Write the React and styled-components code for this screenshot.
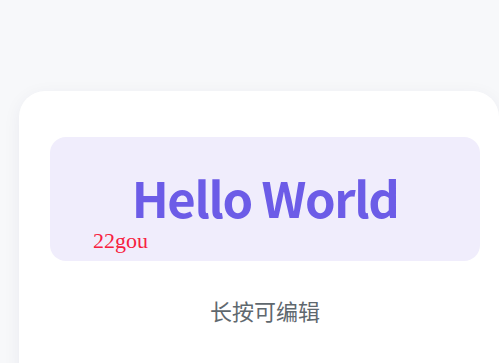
import React from "react";
import styled, { createGlobalStyle } from "styled-components";

const GlobalStyle = createGlobalStyle`
  html, body {
    margin: 0;
    padding: 0;
    background: #f7f8fa;
    overflow: hidden;
  }
  body {
    width: 499px;
    height: 363px;
    font-family: "Noto Sans CJK SC", "Noto Sans", sans-serif;
  }
`;

const Page = styled.div`
  display: flex;
  padding: 91px 0 0 19px;
  height: 363px;
  box-sizing: border-box;
  overflow: hidden;
`;

const Card = styled.div`
  width: 480px;
  height: 300px;
  flex-shrink: 0;
  box-sizing: border-box;
  padding: 46px 19px 0 31px;
  background: #ffffff;
  border-radius: 26px;
  box-shadow: 0 4px 18px rgba(30, 40, 80, 0.06);
  display: flex;
  flex-direction: column;
  align-items: stretch;
`;

const Display = styled.div`
  position: relative;
  height: 124px;
  box-sizing: border-box;
  padding-bottom: 6px;
  border-radius: 16px;
  background: #f0edfc;
  display: flex;
  align-items: center;
  justify-content: center;
`;

const Title = styled.h1`
  margin: 0;
  font-family: "Noto Sans CJK SC", "Noto Sans", sans-serif;
  font-weight: 700;
  font-size: 49px;
  line-height: 1;
  color: #6c5ce7;
  letter-spacing: -1.4px;
`;

const Tag = styled.span`
  position: absolute;
  left: 43px;
  top: 93px;
  font-family: "Liberation Serif", serif;
  font-size: 22px;
  line-height: 22px;
  color: #f7213f;
`;

const Hint = styled.p`
  margin: 34px 0 0;
  text-align: center;
  font-size: 22px;
  line-height: 30px;
  color: #5f686e;
`;

export default function App() {
  return (
    <>
      <GlobalStyle />
      <Page>
        <Card>
          <Display>
            <Title>Hello World</Title>
            <Tag>22gou</Tag>
          </Display>
          <Hint>长按可编辑</Hint>
        </Card>
      </Page>
    </>
  );
}
